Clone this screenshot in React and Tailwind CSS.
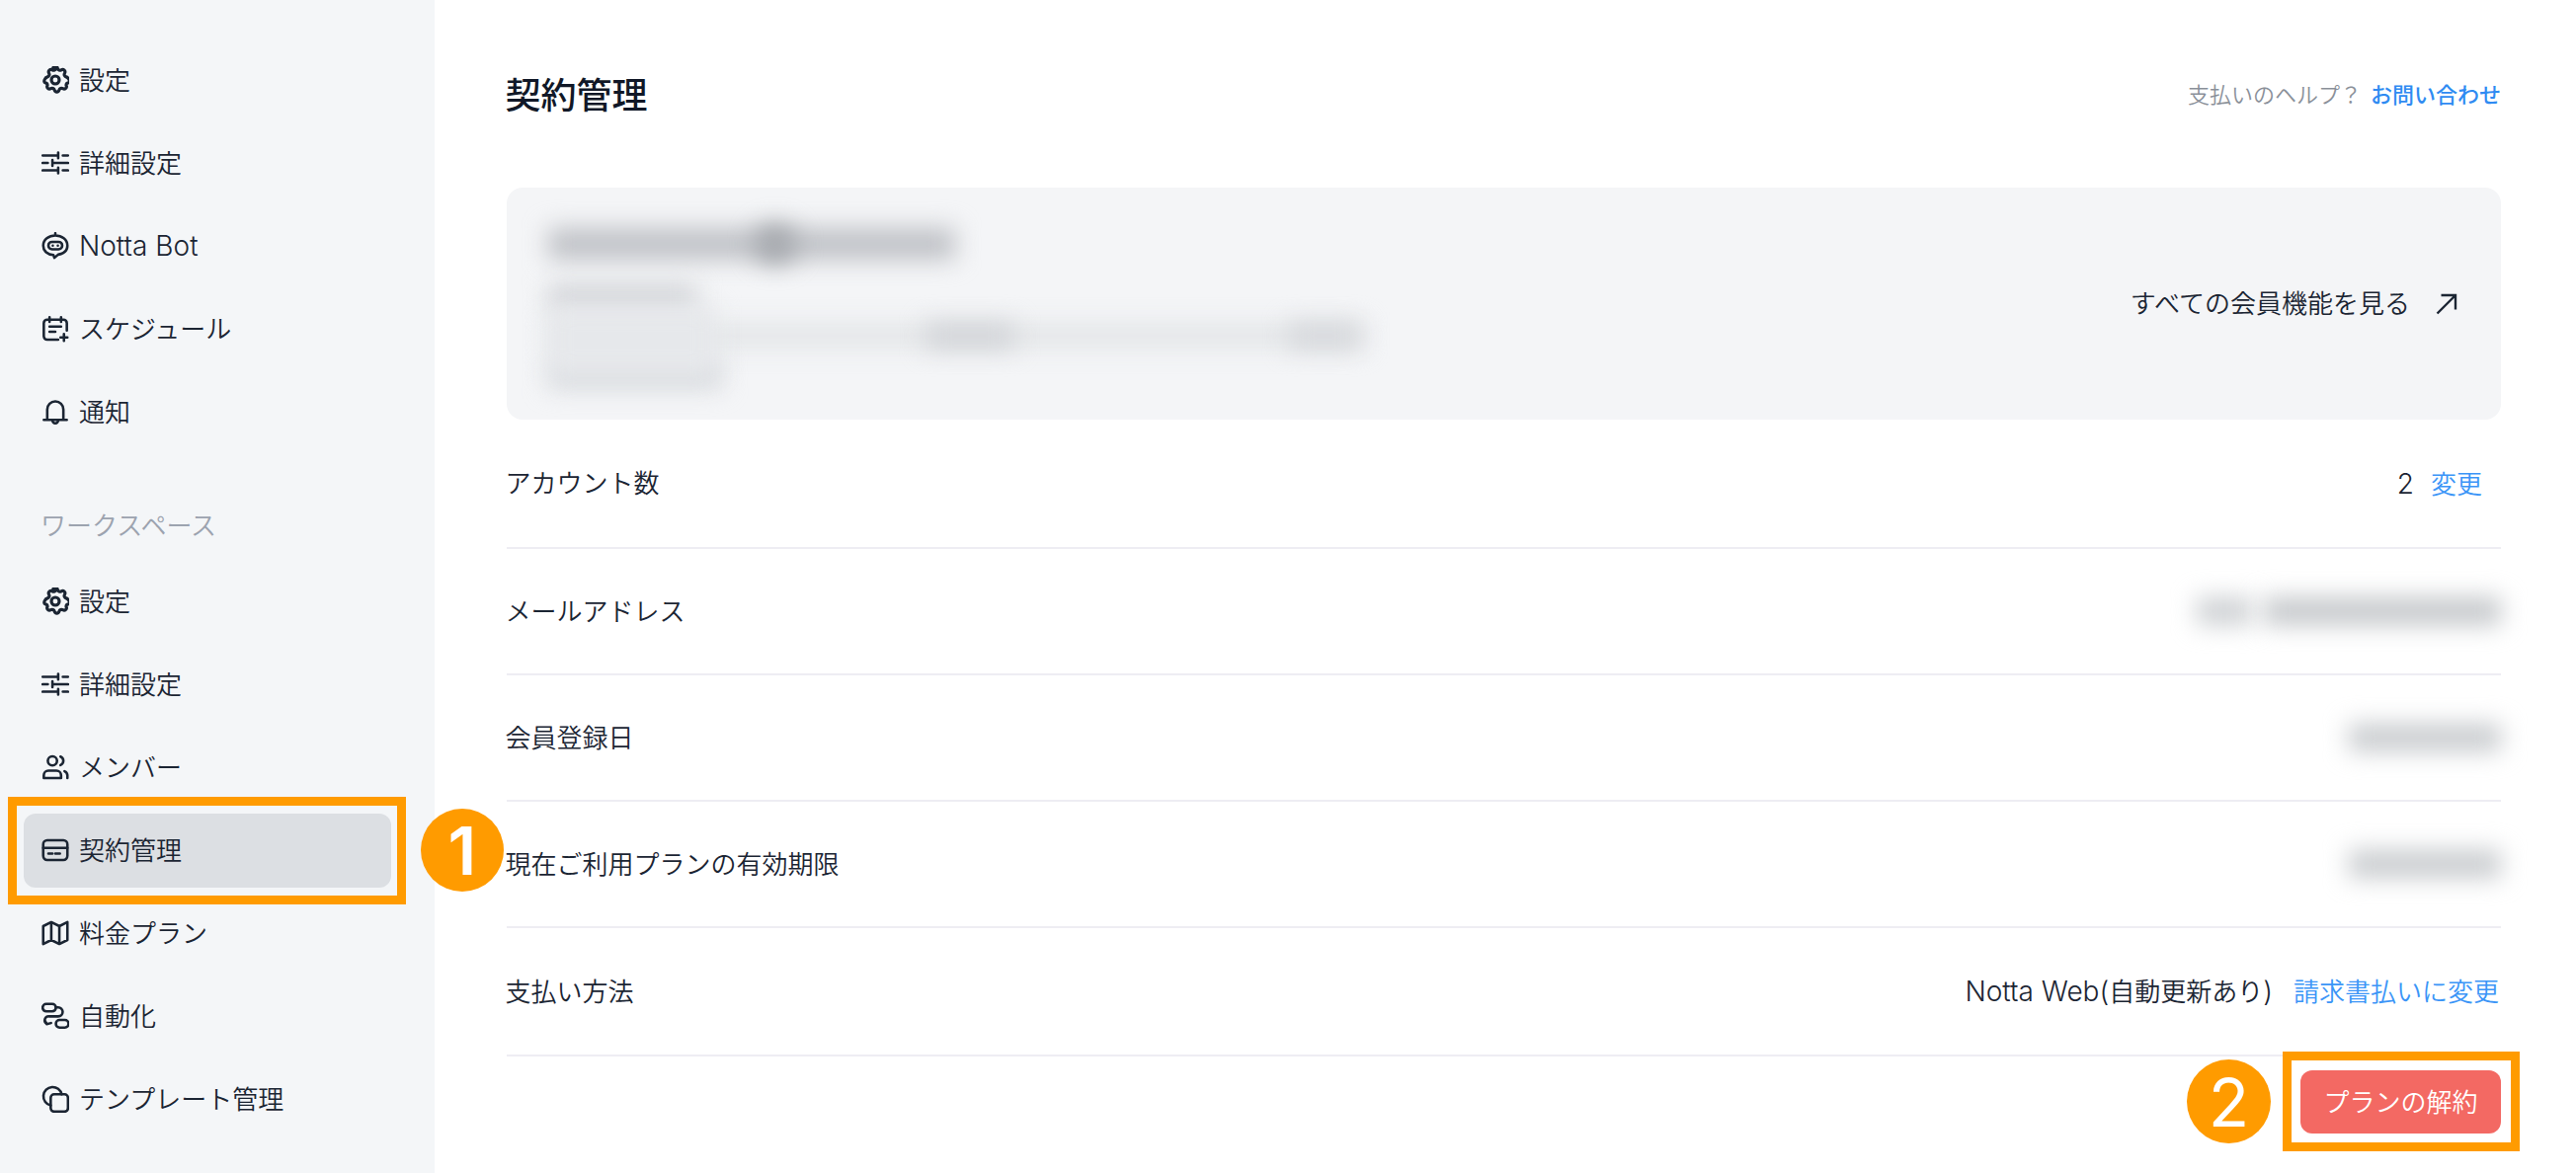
import React from "react";

const Icon = ({ children, box = "0 0 24 24" }) => (
  <svg viewBox={box} fill="none" stroke="currentColor" strokeWidth="2.2" strokeLinecap="round" strokeLinejoin="round" className="w-7 h-7 shrink-0">
    {children}
  </svg>
);

const GearIcon = () => (
  <Icon box="2.2 1.7 19.6 19.6">
    <path d="M10.325 3.317c.426-1.756 2.924-1.756 3.35 0a1.724 1.724 0 0 0 2.573 1.066c1.543-.94 3.31.826 2.37 2.37a1.724 1.724 0 0 0 1.065 2.572c1.756.426 3.3 3.5 1.5 4.2a1.724 1.724 0 0 0-1.5 1.7c.94 1.543-.826 3.31-2.37 2.37a1.724 1.724 0 0 0-2.572 1.065c-.426 1.756-2.924 1.756-3.35 0a1.724 1.724 0 0 0-2.573-1.066c-1.543.94-3.31-.826-2.37-2.37a1.724 1.724 0 0 0-1.5-1.7c-1.8-.7-.256-3.774 1.5-4.2a1.724 1.724 0 0 0 1.066-2.572c-.94-1.543.826-3.31 2.37-2.37c1 .608 2.296.07 2.572-1.065z" />
    <circle cx="12" cy="11.5" r="2.8" />
  </Icon>
);

const SlidersIcon = () => (
  <Icon>
    <path d="M1 5.5h13.5M14.5 3v5M18.5 5.5h4.5M1 12h4.5M9.5 9.5v5M9.5 12h13.5M1 18.5h13.5M14.5 16v5M18.5 18.5h4.5" />
  </Icon>
);

const BotIcon = () => (
  <Icon>
    <path d="M12 1v2M12 3C6.4 3 1.5 6.6 1.5 11.8c0 4.8 3.9 8 8.9 8.2l.8 2.4 3.2-2.8c5-.8 8.1-3.6 8.1-7.8C22.5 6.6 17.6 3 12 3z" />
    <rect x="6" y="8.5" width="12" height="6.5" rx="3.2" />
    <path d="M9.8 11.8h.01M14.2 11.8h.01" />
  </Icon>
);

const CalendarIcon = () => (
  <Icon>
    <path d="M14.5 21.5H5a3 3 0 0 1-3-3V7a3 3 0 0 1 3-3h14a3 3 0 0 1 3 3v6.5M7 2v4M17 2v4M7 10h10M7 14.5h5M19.5 16.5v6M16.5 19.5h6" />
  </Icon>
);

const BellIcon = () => (
  <Icon>
    <path d="M5 19V10a7 7 0 0 1 14 0v9M2 19h20M9.5 19.5a2.5 2.5 0 0 0 5 0" />
  </Icon>
);

const UsersIcon = () => (
  <Icon>
    <circle cx="9.5" cy="6.5" r="4" />
    <path d="M2 21.5v-2.5a4 4 0 0 1 4-4h7a4 4 0 0 1 4 4v2.5zM16.5 2.8a4 4 0 0 1 0 7.4M22.5 21.5V19a4 4 0 0 0-2.5-3.5" />
  </Icon>
);

const CardIcon = () => (
  <Icon>
    <rect x="1.5" y="3.5" width="21" height="17" rx="3.5" />
    <path d="M1.5 10h21M6 15h3.5M12 15h4" />
  </Icon>
);

const MapIcon = () => (
  <Icon>
    <path d="M1.5 6l7-3.5 7 3.5 7-3.5v15.5l-7 3.5-7-3.5-7 3.5zM8.5 2.5V18M15.5 6v15.5" />
  </Icon>
);

const FlowIcon = () => (
  <Icon>
    <rect x="1" y="1.5" width="11.5" height="6.5" rx="3.2" />
    <rect x="12.5" y="15.5" width="11" height="6.5" rx="3.2" />
    <path d="M12.5 4.5h2a3.9 3.9 0 0 1 0 7.8H6.5a3.5 3.5 0 0 0-2 6.5M2.8 15.5l1.7 3.6 3.8-1" />
  </Icon>
);

const CopyIcon = () => (
  <Icon>
    <rect x="8" y="8" width="15" height="15" rx="3" />
    <path d="M8 17.5a8 8 0 1 1 9.5-9.5" />
  </Icon>
);

const Badge = ({ children, className }) => (
  <div className={"absolute rounded-full bg-[#ff9b00] text-white flex items-center justify-center text-[68px] leading-none " + className}>
    {children}
  </div>
);

const NavItem = ({ icon, label, active, latin }) => (
  <div className="h-[84px] flex items-center">
    <div className={"relative w-[372px] h-[75px] ml-6 pl-[18px] flex items-center gap-[10px] rounded-xl " + (active ? "bg-[#dcdfe3]" : "")}>
      {icon}
      <span className={latin ? "text-[28px]" : ""}>{label}</span>
      {active && (
        <>
          <div className="absolute -left-4 -right-[15px] -top-[17px] -bottom-[17px] border-[9px] border-[#ff9b00]"></div>
          <Badge className="left-[402px] -top-[5px] w-[84px] h-[84px] font-semibold">1</Badge>
        </>
      )}
    </div>
  </div>
);

const Blur = ({ className }) => <div className={"blur-[12px] " + className}></div>;

const Row = ({ label, children, className }) => (
  <div className={"flex items-center justify-between border-b-2 border-[#eeedf3] " + className}>
    <span className="-ml-[1.5px]">{label}</span>
    {children}
  </div>
);

export default function App() {
  return (
    <div className="flex h-screen overflow-hidden bg-white text-[26px] font-[350] text-[#1b2533] font-['Inter','Noto_Sans_CJK_JP',sans-serif]">
      {/* Sidebar */}
      <aside className="w-[440px] shrink-0 bg-[#f4f6f8] pt-[39px]">
        <NavItem icon={<GearIcon />} label="設定" />
        <NavItem icon={<SlidersIcon />} label="詳細設定" />
        <NavItem icon={<BotIcon />} label="Notta Bot" latin />
        <NavItem icon={<CalendarIcon />} label="スケジュール" />
        <NavItem icon={<BellIcon />} label="通知" />
        <div className="pl-[41px] pt-[56px] pb-[16px] text-[#9ca3af] leading-[36px]">ワークスペース</div>
        <NavItem icon={<GearIcon />} label="設定" />
        <NavItem icon={<SlidersIcon />} label="詳細設定" />
        <NavItem icon={<UsersIcon />} label="メンバー" />
        <NavItem icon={<CardIcon />} label="契約管理" active />
        <NavItem icon={<MapIcon />} label="料金プラン" />
        <NavItem icon={<FlowIcon />} label="自動化" />
        <NavItem icon={<CopyIcon />} label="テンプレート管理" />
      </aside>

      {/* Main */}
      <main className="flex-1 pl-[73px] pr-[76px]">
        <div className="h-[190px] pt-[3px] flex items-center justify-between">
          <h1 className="-ml-[1.5px] text-[36px] font-medium text-[#111827]">契約管理</h1>
          <div className="text-[22px] text-[#8a9099] flex gap-[9px]">
            <span>支払いのヘルプ？</span>
            <span className="text-[#2f8bf2] font-medium">お問い合わせ</span>
          </div>
        </div>

        <div className="h-[235px] rounded-2xl bg-[#f4f5f7] pl-[42px] pr-[44px] flex items-center justify-between overflow-hidden">
          <div className="relative self-start pt-[41px] flex flex-col">
            <div className="relative w-[412px] h-[32px]">
              <Blur className="w-full h-full bg-[#bfc1c6]" />
              <Blur className="absolute left-[208px] -top-[4px] w-[44px] h-[40px] rounded-full bg-[#a6a9ae]" />
            </div>
            <Blur className="w-[150px] h-[26px] mt-[26px] bg-[#d0d2d6]" />
            <div className="relative mt-[12px] w-[826px] h-[26px]">
              <Blur className="absolute inset-0 bg-[#e4e6e8]" />
              <Blur className="absolute left-[382px] top-0 w-[90px] h-[26px] bg-[#d2d4d8]" />
              <Blur className="absolute left-[749px] top-0 w-[74px] h-[26px] bg-[#d6d8dc]" />
            </div>
            <Blur className="w-[176px] h-[28px] mt-[12px] bg-[#d6d9dd]" />
            <Blur className="absolute left-0 top-[120px] w-[170px] h-[70px] bg-[#e6e8eb]" />
          </div>
          <div className="flex items-center gap-[26px]">
            <span>すべての会員機能を見る</span>
            <svg viewBox="0 0 22 22" fill="none" stroke="currentColor" strokeWidth="2.4" className="w-[22px] h-[22px]">
              <path d="M1.5 20.5L20 2M5.5 2H20V16.5" />
            </svg>
          </div>
        </div>

        <Row label="アカウント数" className="h-[131px] pr-[19px]">
          <div className="flex items-baseline gap-[17px]">
            <span className="text-[28px]">2</span>
            <span className="text-[#3b95f7]">変更</span>
          </div>
        </Row>
        <Row label="メールアドレス" className="h-[128px]">
          <div className="flex gap-[12px]">
            <Blur className="w-[56px] h-[28px] bg-[#cdd0d3]" />
            <Blur className="w-[240px] h-[28px] bg-[#c4c7ca]" />
          </div>
        </Row>
        <Row label="会員登録日" className="h-[128px]">
          <Blur className="w-[154px] h-[28px] bg-[#c8cbce]" />
        </Row>
        <Row label="現在ご利用プランの有効期限" className="h-[128px]">
          <Blur className="w-[154px] h-[28px] bg-[#c8cbce]" />
        </Row>
        <Row label="支払い方法" className="h-[130px]">
          <div className="flex items-baseline gap-[21px]">
            <span><span className="text-[28px]">Notta Web(</span>自動更新あり<span className="text-[28px]">)</span></span>
            <span className="text-[#3b95f7] mr-[2px]">請求書払いに変更</span>
          </div>
        </Row>

        <div className="flex justify-end pt-[14px]">
          <div className="relative w-[203px] h-[64px] rounded-xl bg-[#f36963] text-white flex items-center justify-center">
            プランの解約
            <div className="absolute -left-[18px] -right-[19px] -top-[19px] -bottom-[18px] border-[9px] border-[#ff9b00]"></div>
            <Badge className="-left-[115px] -top-[11px] w-[85px] h-[85px] font-normal">2</Badge>
          </div>
        </div>
      </main>
    </div>
  );
}
